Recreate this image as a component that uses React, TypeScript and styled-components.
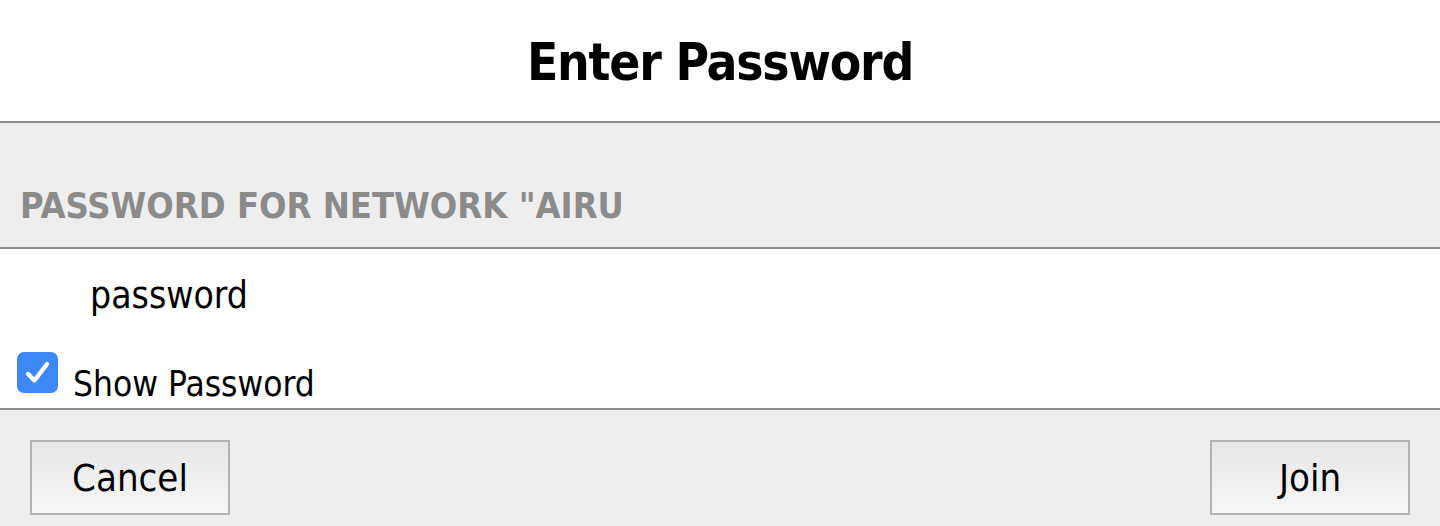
import React from "react";
import styled, { createGlobalStyle } from "styled-components";

const Global = createGlobalStyle`
  html, body { margin: 0; padding: 0; background: #ffffff; }
  body { font-family: "DejaVu Sans Condensed", "DejaVu Sans", sans-serif; color: #000; }
  * { box-sizing: border-box; }
`;

const Dialog = styled.div`
  width: 1440px;
  height: 526px;
  display: flex;
  flex-direction: column;
  background: #ffffff;
  overflow: hidden;
`;

const Header = styled.header`
  height: 123px;
  flex: none;
  display: flex;
  justify-content: center;
  align-items: flex-start;
  padding-top: 37px;
  border-bottom: 2px solid #8e8e8e;
  background: #ffffff;
`;

const Title = styled.h1`
  margin: 0;
  font-size: 51px;
  line-height: 51px;
  font-weight: bold;
  letter-spacing: -1.2px;
`;

const SectionHeader = styled.div`
  height: 126px;
  flex: none;
  background: #eeeeee;
  border-bottom: 2px solid #8e8e8e;
  padding: 65px 0 0 20px;
`;

const SectionLabel = styled.div`
  font-size: 36px;
  line-height: 36px;
  font-weight: bold;
  color: #8b8b8b;
  white-space: nowrap;
`;

const Content = styled.div`
  flex: none;
  height: 161px;
  display: flex;
  flex-direction: column;
  background: #ffffff;
  border-bottom: 2px solid #8e8e8e;
`;

const InputRow = styled.div`
  height: 92px;
  display: flex;
  align-items: center;
  padding-left: 90px;
`;

const PasswordInput = styled.input`
  border: none;
  outline: none;
  background: transparent;
  font-family: inherit;
  font-size: 37px;
  color: #000;
  padding: 0;
  width: 600px;
`;

const CheckRow = styled.label`
  display: flex;
  align-items: flex-start;
  padding-left: 17px;
  gap: 15px;
`;

const CheckBox = styled.span<{ $checked: boolean }>`
  width: 41px;
  height: 41px;
  margin-top: 11px;
  border-radius: 7px;
  background: ${(p) => (p.$checked ? "#3d88f6" : "#ffffff")};
  display: flex;
  align-items: center;
  justify-content: center;
  flex: none;
`;

const CheckText = styled.span`
  font-size: 35px;
  line-height: 35px;
  margin-top: 26px;
  white-space: nowrap;
`;

const Footer = styled.footer`
  flex: 1;
  background: #eeeeee;
  display: flex;
  justify-content: space-between;
  align-items: flex-start;
  padding: 30px 30px 0 30px;
`;

const Button = styled.button`
  width: 200px;
  height: 75px;
  border: 2px solid #b3b3b3;
  background: linear-gradient(#e7e7e7, #f6f6f6);
  font-family: inherit;
  font-size: 38px;
  color: #000;
  padding: 0;
  display: flex;
  align-items: center;
  justify-content: center;
  cursor: pointer;
`;

export default function App() {
  const [checked, setChecked] = React.useState(true);
  return (
    <>
      <Global />
      <Dialog>
        <Header>
          <Title>Enter Password</Title>
        </Header>
        <SectionHeader>
          <SectionLabel>PASSWORD FOR NETWORK "AIRU</SectionLabel>
        </SectionHeader>
        <Content>
          <InputRow>
            <PasswordInput type={checked ? "text" : "password"} defaultValue="password" />
          </InputRow>
          <CheckRow onClick={() => setChecked(!checked)}>
            <CheckBox $checked={checked}>
              {checked && (
                <svg width="30" height="30" viewBox="0 0 30 30">
                  <path d="M5 16 L11.5 22.5 L24 6" fill="none" stroke="#ffffff" strokeWidth="4.4" strokeLinecap="round" strokeLinejoin="round" />
                </svg>
              )}
            </CheckBox>
            <CheckText>Show Password</CheckText>
          </CheckRow>
        </Content>
        <Footer>
          <Button>Cancel</Button>
          <Button>Join</Button>
        </Footer>
      </Dialog>
    </>
  );
}
